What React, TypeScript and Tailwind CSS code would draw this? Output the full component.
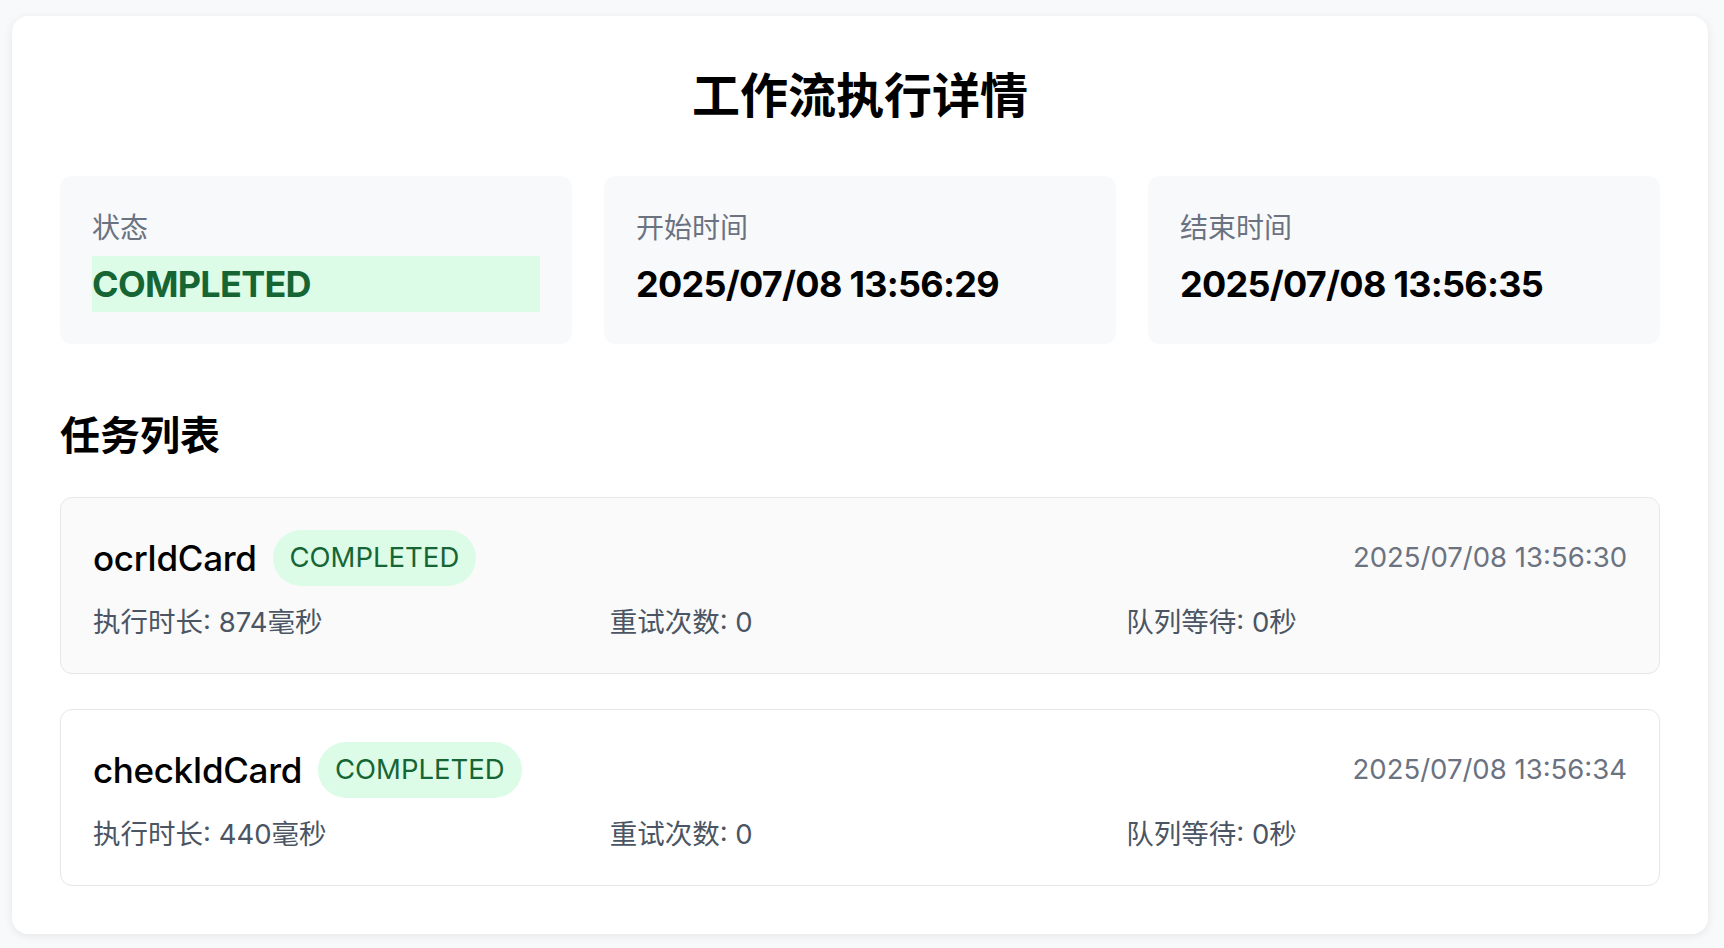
import React from "react";

const FONT = 'Inter, "Noto Sans CJK SC", "Noto Sans", sans-serif';

function StatPanel({ label, value, status }: { label: string; value: string; status?: boolean }) {
  return (
    <div className="rounded-xl bg-[#f8f9fb] p-8">
      <div className="text-[28px] leading-[40px] text-[#6b7280]">{label}</div>
      <div
        className={
          "mt-2 text-[36px] leading-[56px] font-bold tracking-[-0.02em] " +
          (status ? "bg-[#dcfce7] text-[#166534]" : "text-black")
        }
      >
        {value}
      </div>
    </div>
  );
}

type Task = { name: string; time: string; duration: string; bg: string };

function TaskCard({ task }: { task: Task }) {
  return (
    <div className={"rounded-xl border border-[#e5e7eb] p-8 " + task.bg}>
      <div className="flex items-center justify-between h-[56px]">
        <div className="flex items-center gap-4">
          <span className="text-[35px] leading-[56px] font-medium text-black tracking-[-0.01em]">{task.name}</span>
          <span className="inline-flex h-[56px] items-center rounded-full bg-[#dcfce7] px-[17px] text-[27.5px] text-[#166534]">
            COMPLETED
          </span>
        </div>
        <span className="text-[27.5px] text-[#6b7280]">{task.time}</span>
      </div>
      <div className="mt-[17px] grid grid-cols-3 gap-4 text-[27.5px] leading-[38px] text-[#4b5563]">
        <div>执行时长: {task.duration}</div>
        <div>重试次数: 0</div>
        <div>队列等待: 0秒</div>
      </div>
    </div>
  );
}

export default function App() {
  const tasks: Task[] = [
    { name: "ocrIdCard", time: "2025/07/08 13:56:30", duration: "874毫秒", bg: "bg-[#fafafa]" },
    { name: "checkIdCard", time: "2025/07/08 13:56:34", duration: "440毫秒", bg: "bg-white" },
  ];
  return (
    <div className="min-h-screen bg-[#f8f9fa] pt-4 pl-3 pr-4 pb-3" style={{ fontFamily: FONT }}>
      <div className="rounded-2xl bg-white p-12 shadow-[0_2px_10px_rgba(0,0,0,0.08)]">
        <h1 className="text-center text-[48px] leading-[64px] font-bold text-black">工作流执行详情</h1>
        <div className="mt-12 grid grid-cols-3 gap-8">
          <StatPanel label="状态" value="COMPLETED" status />
          <StatPanel label="开始时间" value="2025/07/08 13:56:29" />
          <StatPanel label="结束时间" value="2025/07/08 13:56:35" />
        </div>
        <h2 className="mt-[67px] text-[40px] leading-[50px] font-bold text-black">任务列表</h2>
        <div className="mt-[36px] flex flex-col gap-[35px]">
          {tasks.map((t) => (
            <TaskCard key={t.name} task={t} />
          ))}
        </div>
      </div>
    </div>
  );
}
